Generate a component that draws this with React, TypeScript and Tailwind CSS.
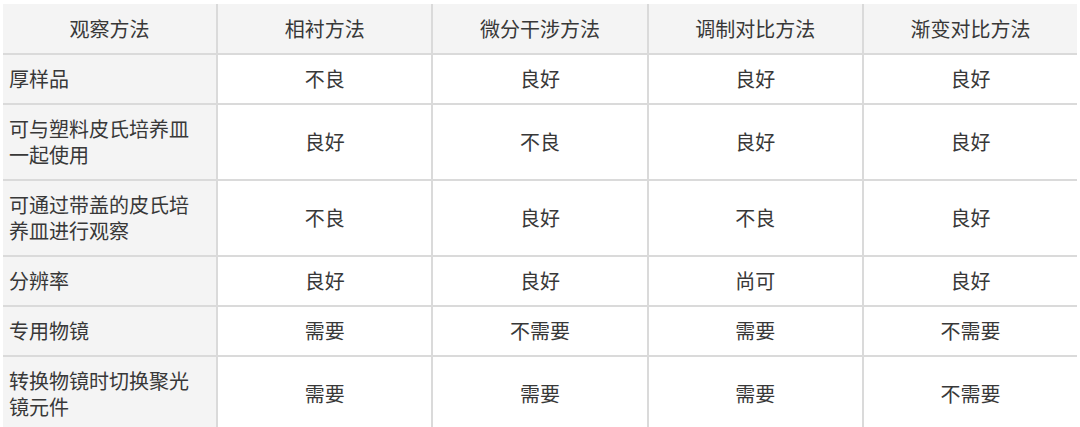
const HEADERS = ['观察方法', '相衬方法', '微分干涉方法', '调制对比方法', '渐变对比方法'];

const ROWS: { label: string[]; values: string[] }[] = [
  { label: ['厚样品'], values: ['不良', '良好', '良好', '良好'] },
  { label: ['可与塑料皮氏培养皿', '一起使用'], values: ['良好', '不良', '良好', '良好'] },
  { label: ['可通过带盖的皮氏培', '养皿进行观察'], values: ['不良', '良好', '不良', '良好'] },
  { label: ['分辨率'], values: ['良好', '良好', '尚可', '良好'] },
  { label: ['专用物镜'], values: ['需要', '不需要', '需要', '不需要'] },
  { label: ['转换物镜时切换聚光', '镜元件'], values: ['需要', '需要', '需要', '不需要'] },
];

export default function App() {
  return (
    <div
      className="h-[427px] w-[1080px] overflow-hidden bg-white pl-[3px] pt-[4px] text-[20px] leading-[26px] text-[#383838]"
      style={{ fontFamily: '"Noto Sans CJK SC", "Noto Sans", sans-serif' }}
    >
      <div className="grid w-[1074px] grid-cols-5 gap-[2px] bg-[#dadada]">
        {HEADERS.map((h) => (
          <div key={h} className="flex h-[49px] items-center justify-center bg-[#f4f4f4]">
            {h}
          </div>
        ))}
        {ROWS.map((row) => {
          const tall = row.label.length > 1;
          const h = tall ? 'h-[74px]' : 'h-[48px]';
          return [
            <div
              key={row.label.join()}
              className={`flex ${h} flex-col justify-center bg-[#f4f4f4] px-[6px]`}
            >
              {row.label.map((line) => (
                <span key={line} className="block">
                  {line}
                </span>
              ))}
            </div>,
            ...row.values.map((v, i) => (
              <div
                key={row.label.join() + i}
                className={`flex ${h} items-center justify-center bg-white`}
              >
                {v}
              </div>
            )),
          ];
        })}
      </div>
    </div>
  );
}
